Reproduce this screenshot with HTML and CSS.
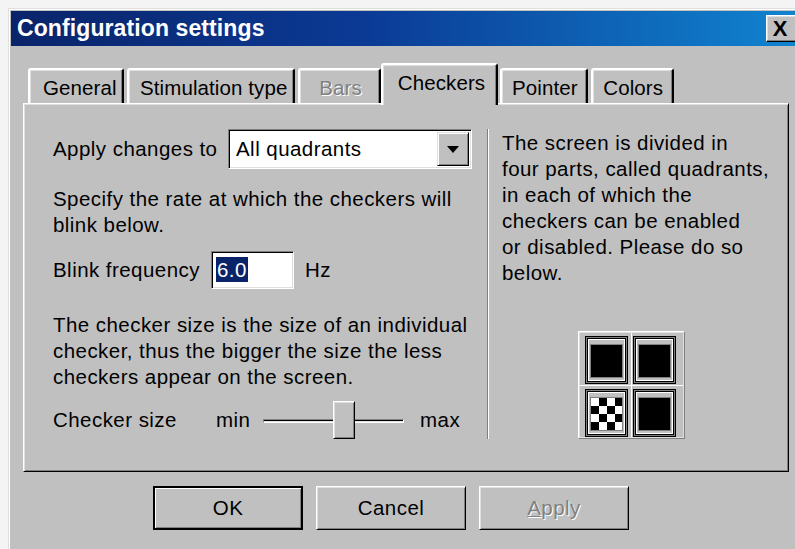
FILE: index.html
```html
<!DOCTYPE html>
<html lang="en">
<head>
<meta charset="utf-8">
<title>Configuration settings</title>
<link rel="stylesheet" href="styles.css">
</head>
<body>
<div class="window">
  <div class="titlebar">
    <span class="title">Configuration settings</span>
    <span class="close">X</span>
  </div>
  <div class="content">
    <div class="tabs">
      <div class="tab tab-general">General</div>
      <div class="tab tab-stim">Stimulation type</div>
      <div class="tab disabled">Bars</div>
      <div class="tab active">Checkers</div>
      <div class="tab">Pointer</div>
      <div class="tab">Colors</div>
    </div>
    <div class="panel">
      <div class="col-left">
        <div class="row apply-row">
          <span class="apply-label">Apply changes to</span>
          <div class="combo">
            <span class="combo-text">All quadrants</span>
            <span class="combo-btn"><svg width="12" height="7" viewBox="0 0 12 7"><path d="M0 0h12L6 7z" fill="#000"/></svg></span>
          </div>
        </div>
        <p class="text rate-text">Specify the rate at which the checkers will<br>blink below.</p>
        <div class="row blink-row">
          <span class="blink-label">Blink frequency</span>
          <div class="edit"><span class="sel">6.0</span></div>
          <span class="unit">Hz</span>
        </div>
        <p class="text size-text">The checker size is the size of an individual<br>checker, thus the bigger the size the less<br>checkers appear on the screen.</p>
        <div class="row size-row">
          <span class="size-label">Checker size</span>
          <span class="min-label">min</span>
          <div class="slider">
            <div class="track"></div>
            <div class="thumb"></div>
          </div>
          <span>max</span>
        </div>
      </div>
      <div class="sep"></div>
      <div class="col-right">
        <p class="text">The screen is divided in<br>four parts, called quadrants,<br>in each of which the<br>checkers can be enabled<br>or disabled. Please do so<br>below.</p>
        <div class="quads">
          <div class="cell"><div class="fill"></div></div>
          <div class="cell"><div class="fill"></div></div>
          <div class="cell"><div class="fill checker"></div></div>
          <div class="cell"><div class="fill"></div></div>
        </div>
      </div>
    </div>
    <div class="buttons">
      <div class="btn default"><span>OK</span></div>
      <div class="btn"><span>Cancel</span></div>
      <div class="btn disabled"><span><u>A</u>pply</span></div>
    </div>
  </div>
</div>
</body>
</html>
```

FILE: styles.css
```css
* { box-sizing: border-box; }

html, body {
  margin: 0;
  padding: 0;
  background: #f4f4f4;
  overflow: hidden;
}

body {
  width: 795px;
  height: 549px;
  font-family: "Liberation Sans", Arial, sans-serif;
  font-size: 20.5px;
  letter-spacing: 0.45px;
  color: #000;
}

.window {
  margin: 8px 0 0 8px;
  width: 793px;
  height: 560px;
  background: #c0c0c0;
  border-top: 1px solid #dfdfdf;
  border-left: 1px solid #dfdfdf;
  box-shadow: inset 1px 1px #fff;
  padding: 2px;
}

/* caption bar */
.titlebar {
  height: 35px;
  display: flex;
  align-items: center;
  padding-left: 6px;
  padding-right: 2px;
  background: linear-gradient(to right, #0a246a 0%, #0b3a95 45%, #1084d0 100%);
}

.title {
  color: #fff;
  font-weight: bold;
  font-size: 23px;
  letter-spacing: 0.1px;
}

.close {
  margin-left: auto;
  width: 31px;
  height: 27px;
  background: #c0c0c0;
  border: 1px solid;
  border-color: #fff #000 #000 #fff;
  box-shadow: inset -1px -1px #808080, inset 1px 1px #dfdfdf;
  display: flex;
  align-items: center;
  justify-content: center;
  font-weight: bold;
  font-size: 22px;
  letter-spacing: 0;
  line-height: 1;
  padding-right: 3px;
}

.content {
  padding: 17px 0 0 12px;
}

/* tab strip */
.tabs {
  display: flex;
  align-items: flex-end;
  padding-left: 5px;
  height: 42px;
  position: relative;
  z-index: 1;
  margin-bottom: -2px;
  letter-spacing: 0.1px;
}

.tab {
  height: 35px;
  min-width: 83px;
  margin-bottom: 2px;
  margin-right: 3px;
  padding: 4px 8px 0 10px;
  line-height: 28px;
  text-align: center;
  border-top: 2px solid #fff;
  border-left: 2px solid #fff;
  border-right: 2px solid #000;
  border-radius: 3px 3px 0 0;
  box-shadow: inset -1px 0 #808080, inset 1px 1px #dfdfdf;
  background: #c0c0c0;
  white-space: nowrap;
}

.tab-general {
  width: 96px;
  padding-left: 13px;
}

.tab-stim {
  width: 168px;
  padding-left: 11px;
}

.tab.disabled {
  color: #808080;
  text-shadow: 1px 1px #fff;
}

.tab.active {
  height: 42px;
  width: 117px;
  margin: 0 2px 0 -3px;
  padding: 3px 8px 0 12px;
  line-height: 30px;
  border-bottom: none;
}

/* property page */
.panel {
  width: 766px;
  height: 369px;
  display: flex;
  border: 1px solid;
  border-color: #fff #000 #000 #fff;
  box-shadow: inset 1px 1px #dfdfdf, inset -1px -1px #808080;
  padding: 26px 0 0 0;
}

.text {
  margin: 0;
  line-height: 26px;
}

.row {
  display: flex;
  align-items: center;
}

.col-left {
  width: 463px;
  padding-left: 29px;
}

.apply-row {
  height: 40px;
  margin-top: -1px;
}

.apply-label {
  width: 175px;
}

.combo {
  width: 244px;
  height: 40px;
  background: #fff;
  border: 1px solid;
  border-color: #808080 #fff #fff #808080;
  box-shadow: inset 1px 1px #000, inset -1px -1px #dfdfdf;
  display: flex;
  align-items: center;
  padding: 2px;
}

.combo-text {
  padding-left: 5px;
  flex: 1;
}

.combo-btn {
  width: 32px;
  height: 34px;
  background: #c0c0c0;
  border: 1px solid;
  border-color: #dfdfdf #000 #000 #dfdfdf;
  box-shadow: inset 1px 1px #fff, inset -1px -1px #808080;
  display: flex;
  align-items: center;
  justify-content: center;
}

.rate-text {
  margin-top: 17px;
}

.blink-row {
  margin-top: 13px;
  height: 38px;
}

.blink-label {
  width: 158px;
}

.edit {
  width: 83px;
  height: 38px;
  background: #fff;
  border: 1px solid;
  border-color: #808080 #fff #fff #808080;
  box-shadow: inset 1px 1px #000, inset -1px -1px #dfdfdf;
  padding: 5px 0 0 4px;
}

.sel {
  display: inline-block;
  background: #0a246a;
  color: #fff;
  line-height: 25px;
  height: 25px;
  padding: 0 1px;
}

.unit {
  margin-left: 11px;
}

.size-text {
  margin-top: 23px;
}

.size-row {
  margin-top: 11px;
  height: 38px;
}

.size-label {
  width: 163px;
}

.min-label {
  width: 47px;
}

.slider {
  position: relative;
  width: 141px;
  height: 38px;
  margin-right: 16px;
  display: flex;
  align-items: center;
}

.track {
  width: 100%;
  height: 4px;
  margin-top: 1px;
  border-top: 1px solid #808080;
  border-bottom: 1px solid #fff;
  box-shadow: inset 0 1px #000, inset 0 -1px #dfdfdf;
  border-left: 1px solid #808080;
  border-right: 1px solid #fff;
}

.thumb {
  position: absolute;
  left: 70px;
  top: 0;
  width: 22px;
  height: 38px;
  background: #c0c0c0;
  border: 1px solid;
  border-color: #fff #000 #000 #fff;
  box-shadow: inset 1px 1px #dfdfdf, inset -1px -1px #808080;
}

/* etched divider between the two columns */
.sep {
  width: 2px;
  height: 310px;
  margin-top: -1px;
  border-left: 1px solid #808080;
  border-right: 1px solid #fff;
}

.col-right {
  flex: 1;
  padding-left: 13px;
}

/* quadrant selector */
.quads {
  margin: 45px 0 0 76px;
  width: 107px;
  height: 108px;
  border: 1px solid;
  border-color: #fff #808080 #808080 #fff;
  box-shadow: inset 1px 1px #dfdfdf, inset -1px -1px #dfdfdf;
  padding: 4px 6px 3px 6px;
  display: grid;
  grid-template-columns: 43px 43px;
  grid-template-rows: 48px 48px;
  gap: 5px;
  background:
    linear-gradient(#fff, #fff) center / 1px 100% no-repeat,
    linear-gradient(#fff, #fff) center / 100% 1px no-repeat,
    #c0c0c0;
}

.cell {
  border: 1px solid #000;
  box-shadow: inset 0 0 0 1px #808080, inset 0 0 0 2px #000, inset 0 0 0 3px #fff;
  background: #c0c0c0;
  display: flex;
  align-items: center;
  justify-content: center;
  padding-top: 2px;
}

.fill {
  width: 31px;
  height: 32px;
  background: #000;
  box-shadow: 0 0 0 1px #808080;
}

.fill.checker {
  background: conic-gradient(#000 25%, #fff 0 50%, #000 0 75%, #fff 0) 0 0 / 16px 16px;
}

/* dialog buttons */
.buttons {
  display: flex;
  gap: 13px;
  margin: 14px 0 0 130px;
}

.btn {
  width: 150px;
  height: 44px;
  background: #c0c0c0;
  border: 1px solid;
  border-color: #fff #000 #000 #fff;
  box-shadow: inset 1px 1px #dfdfdf, inset -1px -1px #808080;
  display: flex;
  align-items: center;
  justify-content: center;
}

.btn.default {
  border: 2px solid #000;
  box-shadow: inset 1px 1px #fff, inset -1px -1px #808080;
}

.btn.disabled {
  color: #808080;
  text-shadow: 1px 1px #fff;
}

.btn u {
  text-decoration-thickness: 1px;
}
```
